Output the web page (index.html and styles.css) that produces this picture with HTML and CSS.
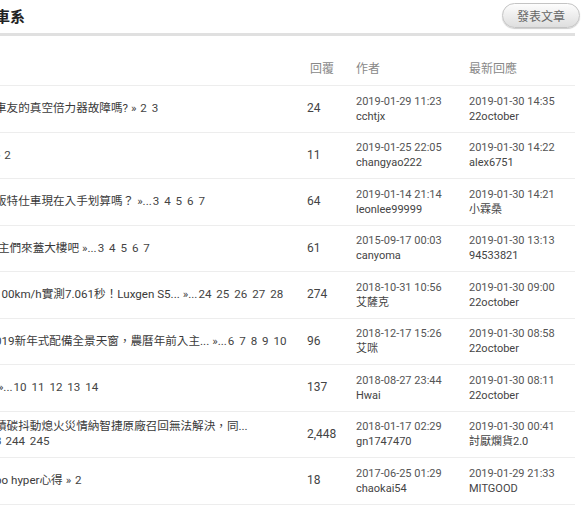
FILE: index.html
```html
<!DOCTYPE html>
<html lang="zh-Hant">
<head>
<meta charset="utf-8">
<title>車系</title>
<link rel="stylesheet" href="styles.css">
</head>
<body>
<div class="page">
  <div class="topbar">
    <h1 class="board-title">車系</h1>
    <button class="post-btn" type="button">發表文章</button>
  </div>
  <div class="topics">
    <div class="row head">
      <div class="c-title"></div>
      <div class="c-reply">回覆</div>
      <div class="c-author">作者</div>
      <div class="c-last">最新回應</div>
    </div>

    <div class="row">
      <div class="c-title">車友的真空倍力器故障嗎?<span class="pages">» <span>2</span> <span>3</span></span></div>
      <div class="c-reply">24</div>
      <div class="c-author"><div class="time">2019-01-29 11:23</div><div class="name">cchtjx</div></div>
      <div class="c-last"><div class="time">2019-01-30 14:35</div><div class="name">22october</div></div>
    </div>

    <div class="row">
      <div class="c-title"><span class="pages first">» <span>2</span></span></div>
      <div class="c-reply">11</div>
      <div class="c-author"><div class="time">2019-01-25 22:05</div><div class="name">changyao222</div></div>
      <div class="c-last"><div class="time">2019-01-30 14:22</div><div class="name">alex6751</div></div>
    </div>

    <div class="row">
      <div class="c-title">販特仕車現在入手划算嗎？<span class="pages">»...<span>3</span> <span>4</span> <span>5</span> <span>6</span> <span>7</span></span></div>
      <div class="c-reply">64</div>
      <div class="c-author"><div class="time">2019-01-14 21:14</div><div class="name">leonlee99999</div></div>
      <div class="c-last"><div class="time">2019-01-30 14:21</div><div class="name">小霖桑</div></div>
    </div>

    <div class="row">
      <div class="c-title">&nbsp;主們來蓋大樓吧<span class="pages">»...<span>3</span> <span>4</span> <span>5</span> <span>6</span> <span>7</span></span></div>
      <div class="c-reply">61</div>
      <div class="c-author"><div class="time">2015-09-17 00:03</div><div class="name">canyoma</div></div>
      <div class="c-last"><div class="time">2019-01-30 13:13</div><div class="name">94533821</div></div>
    </div>

    <div class="row">
      <div class="c-title">100km/h實測7.061秒！Luxgen S5...<span class="pages">»...<span>24</span> <span>25</span> <span>26</span> <span>27</span> <span>28</span></span></div>
      <div class="c-reply">274</div>
      <div class="c-author"><div class="time">2018-10-31 10:56</div><div class="name">艾薩克</div></div>
      <div class="c-last"><div class="time">2019-01-30 09:00</div><div class="name">22october</div></div>
    </div>

    <div class="row">
      <div class="c-title">019新年式配備全景天窗，農曆年前入主...<span class="pages">»...<span>6</span> <span>7</span> <span>8</span> <span>9</span> <span>10</span></span></div>
      <div class="c-reply">96</div>
      <div class="c-author"><div class="time">2018-12-17 15:26</div><div class="name">艾咪</div></div>
      <div class="c-last"><div class="time">2019-01-30 08:58</div><div class="name">22october</div></div>
    </div>

    <div class="row">
      <div class="c-title">&nbsp;<span class="pages first">»...<span>10</span> <span>11</span> <span>12</span> <span>13</span> <span>14</span></span></div>
      <div class="c-reply">137</div>
      <div class="c-author"><div class="time">2018-08-27 23:44</div><div class="name">Hwai</div></div>
      <div class="c-last"><div class="time">2019-01-30 08:11</div><div class="name">22october</div></div>
    </div>

    <div class="row">
      <div class="c-title"><div class="line">積碳抖動熄火災情納智捷原廠召回無法解決，同...</div><div class="line pages first">3 <span>244</span> <span>245</span></div></div>
      <div class="c-reply">2,448</div>
      <div class="c-author"><div class="time">2018-01-17 02:29</div><div class="name">gn1747470</div></div>
      <div class="c-last"><div class="time">2019-01-30 00:41</div><div class="name">討厭爛貨2.0</div></div>
    </div>

    <div class="row">
      <div class="c-title">bo hyper心得<span class="pages">» <span>2</span></span></div>
      <div class="c-reply">18</div>
      <div class="c-author"><div class="time">2017-06-25 01:29</div><div class="name">chaokai54</div></div>
      <div class="c-last"><div class="time">2019-01-29 21:33</div><div class="name">MITGOOD</div></div>
    </div>

    <div class="row">
      <div class="c-title">U6 旗艦型 使用心得分享</div>
      <div class="c-reply">42</div>
      <div class="c-author"><div class="time">2018-11-02 18:40</div><div class="name">sky0916</div></div>
      <div class="c-last"><div class="time">2019-01-29 20:12</div><div class="name">22october</div></div>
    </div>
  </div>
</div>
</body>
</html>
```

FILE: styles.css
```css
* { box-sizing: border-box; }

html, body {
  margin: 0;
  background: #ffffff;
}

body {
  font-family: Roboto, "Noto Sans CJK TC", sans-serif;
  color: #333333;
  overflow: hidden;
}

.page {
  padding-right: 7px;
  overflow: hidden;
}

.topbar {
  display: flex;
  justify-content: space-between;
  align-items: flex-start;
  height: 36px;
  margin-left: -5px;
  border-bottom: 3px solid #e0e0e0;
}

.board-title {
  margin: 0;
  padding-top: 5px;
  font-size: 15px;
  line-height: 22px;
  font-weight: 700;
  color: #222222;
  font-family: "Noto Sans CJK TC", sans-serif;
}

.post-btn {
  margin: 3px -5px 0 0;
  width: 78px;
  height: 25px;
  padding: 0;
  border: 1px solid #c4c4c4;
  border-radius: 13px;
  background: linear-gradient(#fdfdfd, #dedede);
  box-shadow: 0 1px 1px rgba(0, 0, 0, 0.2);
  font-family: "Noto Sans CJK TC", sans-serif;
  font-size: 12px;
  color: #666666;
}

.topics {
  margin-left: -5px;
}

.row {
  display: grid;
  grid-template-columns: 312px 49px 113px 106px;
  align-items: center;
  padding: 7.75px 0;
  border-bottom: 1px solid #ededed;
  font-size: 11px;
  line-height: 15px;
}

.row.head {
  padding: 25px 0 8px;
  font-size: 12px;
  line-height: 16px;
  color: #888888;
}

.row.head .c-reply {
  padding-left: 3px;
}

.c-title {
  white-space: nowrap;
  overflow: hidden;
  font-size: 11.6px;
  color: #3a3a3a;
}

.c-reply {
  font-size: 12px;
  color: #444444;
}

.row.head .c-reply {
  color: #888888;
}

.time {
  color: #555555;
}

.name {
  color: #444444;
}

.pages {
  margin-left: 3px;
  color: #444444;
}

.pages.first {
  margin-left: 0;
}

.pages span {
  margin: 0 1px;
}

.line {
  display: block;
}
```
